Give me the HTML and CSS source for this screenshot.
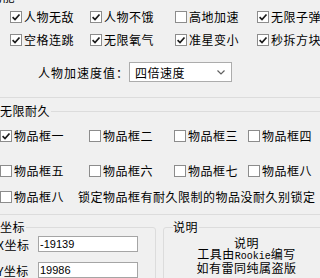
FILE: index.html
```html
<!DOCTYPE html>
<html lang="zh-CN">
<head>
<meta charset="utf-8">
<title>功能</title>
<link rel="stylesheet" href="styles.css">
</head>
<body>
<div class="form">
  <div class="g-func">
    <div class="legend legend-top">功能</div>
    <div class="grid1">
      <label class="chk"><span class="box"><svg viewBox="0 0 10 10"><path d="M1.6 5.2 L4 7.5 L8.5 2.5"/></svg></span>人物无敌</label>
      <label class="chk"><span class="box"><svg viewBox="0 0 10 10"><path d="M1.6 5.2 L4 7.5 L8.5 2.5"/></svg></span>人物不饿</label>
      <label class="chk"><span class="box"></span>高地加速</label>
      <label class="chk"><span class="box"><svg viewBox="0 0 10 10"><path d="M1.6 5.2 L4 7.5 L8.5 2.5"/></svg></span>无限子弹</label>
      <label class="chk"><span class="box"><svg viewBox="0 0 10 10"><path d="M1.6 5.2 L4 7.5 L8.5 2.5"/></svg></span>空格连跳</label>
      <label class="chk"><span class="box"><svg viewBox="0 0 10 10"><path d="M1.6 5.2 L4 7.5 L8.5 2.5"/></svg></span>无限氧气</label>
      <label class="chk"><span class="box"><svg viewBox="0 0 10 10"><path d="M1.6 5.2 L4 7.5 L8.5 2.5"/></svg></span>准星变小</label>
      <label class="chk"><span class="box"><svg viewBox="0 0 10 10"><path d="M1.6 5.2 L4 7.5 L8.5 2.5"/></svg></span>秒拆方块</label>
    </div>
    <div class="speed-row">
      <span class="speed-label">人物加速度值：</span>
      <div class="select"><span>四倍速度</span><svg class="arrow" viewBox="0 0 8 5"><path d="M0.5 0.5 L4 4 L7.5 0.5"/></svg></div>
    </div>
  </div>

  <div class="group g-dur">
    <div class="legend legend-dur">无限耐久</div>
    <div class="grid2 row1">
      <label class="chk"><span class="box"><svg viewBox="0 0 10 10"><path d="M1.6 5.2 L4 7.5 L8.5 2.5"/></svg></span>物品框一</label>
      <label class="chk"><span class="box"></span>物品框二</label>
      <label class="chk"><span class="box"></span>物品框三</label>
      <label class="chk"><span class="box"></span>物品框四</label>
    </div>
    <div class="grid2 row2">
      <label class="chk"><span class="box"></span>物品框五</label>
      <label class="chk"><span class="box"></span>物品框六</label>
      <label class="chk"><span class="box"></span>物品框七</label>
      <label class="chk"><span class="box"></span>物品框八</label>
    </div>
    <div class="row3">
      <label class="chk chk-first"><span class="box"></span>物品框八</label>
      <span class="note">锁定物品框有耐久限制的物品没耐久别锁定</span>
    </div>
  </div>

  <div class="bottom">
    <div class="group g-coord">
      <div class="legend legend-coord">坐标</div>
      <div class="field fx">
        <span class="flabel">X坐标</span>
        <div class="textbox">-19139</div>
      </div>
      <div class="field fy">
        <span class="flabel">Y坐标</span>
        <div class="textbox">19986</div>
      </div>
    </div>
    <div class="group g-info">
      <div class="legend legend-info">说明</div>
      <div class="notes">
        <div>说明</div>
        <div>工具由<span class="mono">Rookie</span>编写</div>
        <div>如有雷同纯属盗版</div>
      </div>
    </div>
  </div>
</div>
</body>
</html>
```

FILE: styles.css
```css
* { box-sizing: border-box; }
html, body { margin: 0; padding: 0; }
body {
  width: 320px;
  height: 278px;
  overflow: hidden;
  background: #f0f0f0;
  font-family: "Noto Sans CJK SC", "Microsoft YaHei", sans-serif;
  font-size: 12px;
  line-height: 15px;
  letter-spacing: 0.5px;
  color: #000;
}
.form { display: flex; flex-direction: column; }

.group {
  border: 1px solid #dcdcdc;
  border-radius: 3px;
  display: flex;
  flex-direction: column;
}
.legend {
  height: 15px;
  align-self: flex-start;
  background: #f0f0f0;
  padding-right: 1px;
  white-space: nowrap;
}

/* checkbox */
.chk {
  display: flex;
  align-items: center;
  gap: 2px;
  height: 15px;
  white-space: nowrap;
}
.box {
  width: 12px;
  height: 12px;
  flex: none;
  border: 1px solid #8c8c8c;
  background: #fff;
  display: flex;
  align-items: center;
  justify-content: center;
}
.box svg { width: 10px; height: 10px; display: block; }
.box path { fill: none; stroke: #1a1a1a; stroke-width: 1.7; }

/* top group */
.g-func {
  border-bottom: 1px solid #dcdcdc;
  padding-bottom: 15px;
  margin: 0 -10px 0 0;
  display: flex;
  flex-direction: column;
}
.legend-top { margin: -11px 0 0 -10px; }
.grid1 {
  display: grid;
  grid-template-columns: 80px 85px 82px auto;
  row-gap: 8px;
  margin-top: 5px;
  padding-left: 10px;
}
.speed-row {
  display: flex;
  align-items: center;
  height: 20px;
  margin-top: 15px;
  padding-left: 38px;
}
.speed-label { letter-spacing: 1px; }
.select {
  width: 103px;
  height: 20px;
  border: 1px solid #acacac;
  background: #fff;
  display: flex;
  align-items: center;
  justify-content: space-between;
  padding: 0 6px 0 5px;
}
.arrow { width: 8px; height: 5px; display: block; }
.arrow path { fill: none; stroke: #606060; stroke-width: 1.2; }

/* durability group */
.g-dur {
  margin: 13px -10px 0 -8px;
  padding: 0 0 10px 7px;
}
.legend-dur { margin-top: -9px; }
.grid2 {
  display: grid;
  grid-template-columns: 89px 85px 74px auto;
}
.row1 { margin-top: 10px; }
.row2 { margin-top: 20px; }
.row3 { margin-top: 11px; display: flex; align-items: center; }
.chk-first { width: 78px; }
.note { white-space: nowrap; }

/* bottom */
.bottom {
  display: flex;
  gap: 7px;
  margin: 12px -10px 0 -8px;
}
.g-coord {
  width: 164px;
  flex: none;
  padding-left: 4px;
  height: 60px;
}
.legend-coord { margin: -9px 0 0 3px; }
.field {
  display: flex;
  align-items: center;
  height: 16px;
}
.fx { margin-top: 2px; }
.fy { margin-top: 10px; }
.flabel { width: 41px; flex: none; white-space: nowrap; }
.textbox {
  width: 100px;
  height: 16px;
  border: 1px solid #a5a5a5;
  background: #fff;
  font-family: "Liberation Sans", Arial, sans-serif;
  font-size: 11px;
  line-height: 14px;
  letter-spacing: 0;
  padding-left: 1px;
}
.g-info {
  flex: 1;
  height: 60px;
}
.legend-info { margin: -9px 0 0 9px; }
.notes {
  margin-top: 3px;
  text-align: center;
  line-height: 11px;
}
.mono {
  font-family: "Liberation Mono", "Courier New", monospace;
  font-size: 10px;
  letter-spacing: 0;
}
```
